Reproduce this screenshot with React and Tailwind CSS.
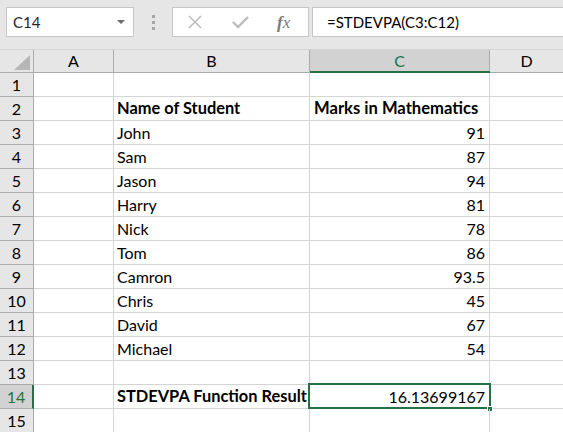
import React from 'react'

const rows = [
  { n: 1, b: '', c: '' },
  { n: 2, b: 'Name of Student', c: 'Marks in Mathematics', bold: true },
  { n: 3, b: 'John', c: '91' },
  { n: 4, b: 'Sam', c: '87' },
  { n: 5, b: 'Jason', c: '94' },
  { n: 6, b: 'Harry', c: '81' },
  { n: 7, b: 'Nick', c: '78' },
  { n: 8, b: 'Tom', c: '86' },
  { n: 9, b: 'Camron', c: '93.5' },
  { n: 10, b: 'Chris', c: '45' },
  { n: 11, b: 'David', c: '67' },
  { n: 12, b: 'Michael', c: '54' },
  { n: 13, b: '', c: '' },
  { n: 14, b: 'STDEVPA Function Result', c: '16.13699167', result: true },
  { n: 15, b: '', c: '' },
]

function Toolbar() {
  return (
    <div className="h-[49px] bg-[#e6e6e6] flex items-start pt-[7px]">
      {/* Name box */}
      <div className="ml-[6px] w-[128px] h-[30px] bg-white border border-[#c6c6c6] flex items-center justify-between pl-[6px] pr-[8px]">
        <span className="text-[15px] text-[#262626]">C14</span>
        <svg width="8" height="5" viewBox="0 0 8 5">
          <path d="M0 0h8L4 4z" fill="#6b6b6b" />
        </svg>
      </div>
      {/* divider dots */}
      <div className="w-[38px] h-[30px] flex flex-col items-center justify-center gap-[3px]">
        <div className="w-[3px] h-[3px] bg-[#a6a6a6]" />
        <div className="w-[3px] h-[3px] bg-[#a6a6a6]" />
        <div className="w-[3px] h-[3px] bg-[#a6a6a6]" />
      </div>
      {/* formula buttons */}
      <div className="w-[137px] h-[30px] bg-white border border-[#c6c6c6] flex items-center">
        <svg className="ml-[14px]" width="16" height="16" viewBox="0 0 16 16">
          <path d="M2 2l12 12M14 2L2 14" stroke="#bdbdbd" strokeWidth="1.6" />
        </svg>
        <svg className="ml-[29px]" width="17" height="14" viewBox="0 0 17 14">
          <path d="M1 7l5 5L16 2" stroke="#bdbdbd" strokeWidth="2.4" fill="none" />
        </svg>
        <span className="ml-[28px] text-[17px] italic text-[#7a7a7a] leading-none" style={{ fontFamily: '"Liberation Serif", serif' }}>
          <span className="font-bold">f</span>x
        </span>
      </div>
      {/* formula input */}
      <div className="ml-[3px] flex-1 h-[30px] bg-white border border-[#c6c6c6] border-r-0 flex items-center pl-[14px]">
        <span className="text-[15px] text-black">=STDEVPA(C3:C12)</span>
      </div>
    </div>
  )
}

function HeaderRow() {
  return (
    <div className="flex h-[24px] bg-[#e6e6e6] border-b border-[#ababab] border-t border-t-[#d4d4d4]">
      <div className="w-[34px] border-r border-[#ababab] relative">
        <svg className="absolute right-[3px] bottom-[2px]" width="16" height="15" viewBox="0 0 16 15">
          <path d="M16 0V15H0z" fill="#b6b6b6" />
        </svg>
      </div>
      <div className="w-[80px] border-r border-[#ababab] flex items-center justify-center text-[16px] text-black">A</div>
      <div className="w-[196px] border-r border-[#ababab] flex items-center justify-center text-[16px] text-black">B</div>
      <div className="w-[180px] border-r border-[#ababab] bg-[#d2d2d2] flex items-center justify-center text-[16px] text-[#217346] relative">
        C
        <div className="absolute left-0 right-[-1px] bottom-[-1px] h-[2px] bg-[#217346]" />
      </div>
      <div className="flex-1 flex items-center justify-center text-[16px] text-black">D</div>
    </div>
  )
}

function Row({ r }) {
  const sel = r.result
  return (
    <div className="flex h-[24px]">
      <div
        className={
          sel
            ? 'w-[34px] bg-[#d2d2d2] border-b border-[#ababab] border-r-2 border-r-[#217346] flex items-center justify-center text-[16px] text-[#217346]'
            : 'w-[34px] bg-[#e6e6e6] border-b border-[#ababab] border-r border-r-[#ababab] flex items-center justify-center text-[16px] text-black'
        }
      >
        {r.n}
      </div>
      <div className="w-[80px] border-r border-b border-[#d4d4d4]" />
      <div
        className={
          'w-[196px] border-r border-b border-[#d4d4d4] flex items-center pl-[3px] text-black whitespace-nowrap ' +
          (r.bold || r.result ? 'font-bold text-[16.4px]' : 'text-[16px]')
        }
      >
        {r.b}
      </div>
      <div
        className={
          'w-[180px] border-r border-b border-[#d4d4d4] flex items-center text-black whitespace-nowrap relative ' +
          (r.bold ? 'font-bold text-[16.6px] pl-[4px]' : 'text-[16px] justify-end pr-[4px]')
        }
      >
        {sel && (
          <>
            <div className="absolute left-[-2px] top-[-2px] right-[-2px] bottom-[-1px] border-2 border-[#217346]" />
            <div className="absolute right-[-4px] bottom-[-4px] w-[6px] h-[6px] bg-[#217346] border border-white" />
          </>
        )}
        <span className="relative">{r.c}</span>
      </div>
      <div className="flex-1 border-b border-[#d4d4d4]" />
    </div>
  )
}

export default function App() {
  return (
    <div
      className="w-[563px] h-[432px] overflow-hidden bg-white"
      style={{ fontFamily: 'Lato, "Noto Sans", sans-serif' }}
    >
      <Toolbar />
      <HeaderRow />
      {rows.map((r) => (
        <Row key={r.n} r={r} />
      ))}
    </div>
  )
}
